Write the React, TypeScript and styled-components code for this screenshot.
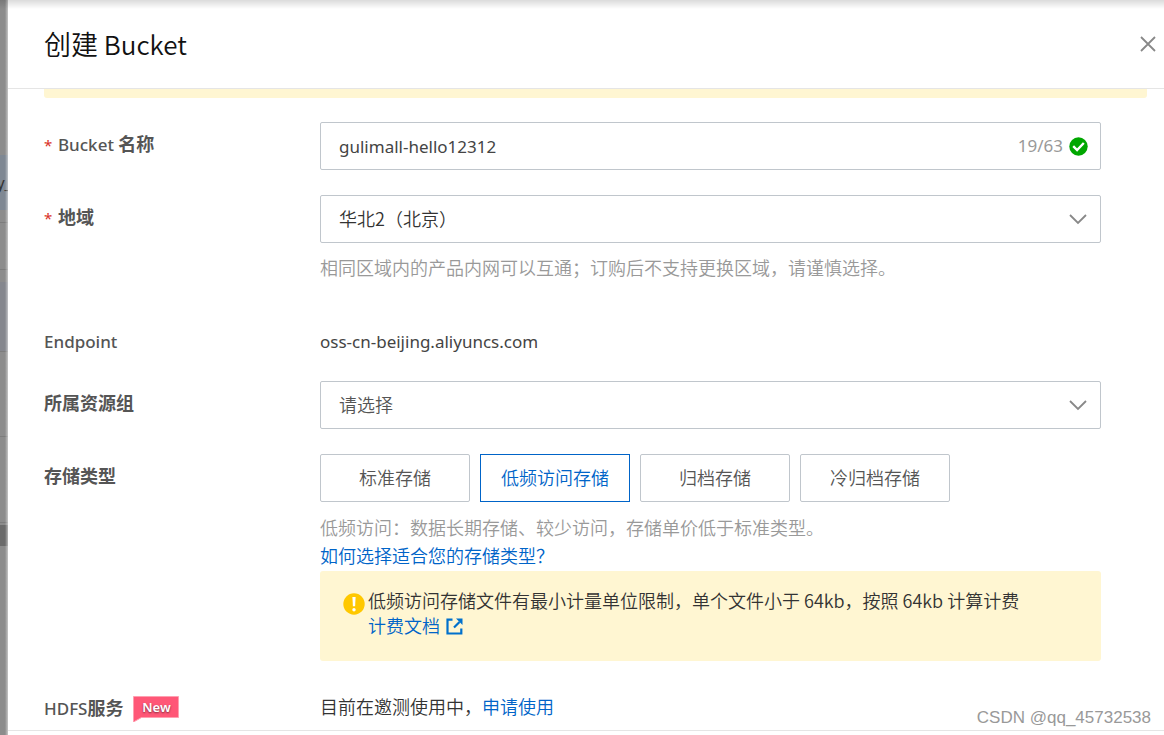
import React from "react";
import styled, { createGlobalStyle, css } from "styled-components";

const GlobalStyle = createGlobalStyle`
  *, *::before, *::after { box-sizing: border-box; }
  body {
    margin: 0;
    background: #fff;
    color: #333;
    font: 18px/24px "Noto Sans CJK SC", sans-serif;
  }
`;

const latin = css`
  font-family: "Noto Sans", "Noto Sans CJK SC", sans-serif;
`;

const Page = styled.div`
  position: relative;
  display: flex;
  height: 100vh;
  overflow: hidden;

  &::before {
    content: "";
    position: absolute;
    z-index: 1;
    inset: 0 0 auto;
    height: 9px;
    background: linear-gradient(rgba(0, 0, 0, 0.14), rgba(0, 0, 0, 0));
    pointer-events: none;
  }
`;

const Backdrop = styled.div`
  position: relative;
  flex: 0 0 8px;
  display: flex;
  flex-direction: column;
  overflow: hidden;
  background: #8c8c8c;

  &::after {
    content: "";
    position: absolute;
    inset: 0 0 0 auto;
    width: 3px;
    background: linear-gradient(to right, rgba(255, 255, 255, 0), rgba(255, 255, 255, 0.5));
  }
`;

const Strip = styled.div<{ $h: number; $bg?: string; $line?: boolean }>`
  display: flex;
  flex: 0 0 ${(p) => p.$h}px;
  align-items: center;
  justify-content: center;
  background: ${(p) => p.$bg ?? "transparent"};
  border-bottom: ${(p) => (p.$line ? "1px solid #7c7c7c" : "0")};
  color: #333;
  ${latin}
  font-size: 16px;
`;

const Drawer = styled.main`
  flex: 1;
  min-width: 0;
  display: flex;
  flex-direction: column;
  background: #fff;
`;

const Header = styled.header`
  display: flex;
  align-items: center;
  justify-content: space-between;
  flex: 0 0 89px;
  padding: 0 8px 0 36px;
  border-bottom: 1px solid #e5e5e5;
`;

const Title = styled.h1`
  margin: 0;
  font-size: 27px;
  line-height: 36px;
  font-weight: 350;
  color: #111;

  span { font-size: 26px; }
`;

const Close = styled.button`
  display: flex;
  padding: 0;
  border: 0;
  background: none;
`;

const Body = styled.div`
  flex: 1;
  min-height: 0;
  overflow: hidden;
  padding: 0 17px 0 36px;
`;

const Banner = styled.div`
  height: 9px;
  border-radius: 0 0 3px 3px;
  background: #fff6d2;
`;

const Form = styled.form`
  display: flex;
  flex-direction: column;
  gap: 25px;
  padding: 24px 46px 0 0;
`;

const Row = styled.div<{ $before?: number }>`
  display: grid;
  grid-template-columns: 276px minmax(0, 1fr);
  margin-top: ${(p) => p.$before ?? 0}px;
`;

const Name = styled.label<{ $top?: number }>`
  display: flex;
  align-items: baseline;
  align-self: start;
  padding-top: ${(p) => p.$top ?? 9}px;
  font-weight: 700;
  color: #555;
`;

const LatinPart = styled.span`
  ${latin}
  font-size: 17px;
  font-weight: 500;
`;

const Star = styled.span`
  width: 14px;
  ${latin}
  font-size: 15px;
  font-weight: 400;
  color: #d93026;
`;

const Cell = styled.div`
  min-width: 0;
`;

const Field = styled.div`
  position: relative;
  display: flex;
  align-items: center;
  height: 48px;
  border: 1px solid #c0c6cc;
  border-radius: 2px;
`;

const Input = styled.input`
  flex: 1;
  min-width: 0;
  height: 100%;
  padding: 0 18px;
  border: 0;
  outline: 0;
  background: none;
  color: #444;
  ${latin}
  font-size: 17px;
`;

const Count = styled.span`
  ${latin}
  font-size: 17px;
  color: #999;
`;

const Status = styled.svg`
  margin: 0 12px 0 6px;
`;

const Select = styled.select<{ $muted?: boolean }>`
  width: 100%;
  height: 100%;
  padding: 0 48px 2px 18px;
  border: 0;
  outline: 0;
  appearance: none;
  background: none;
  font: 350 18px/24px "Noto Sans CJK SC", sans-serif;
  color: ${(p) => (p.$muted ? "#555" : "#333")};
`;

const Chevron = styled.svg`
  position: absolute;
  right: 12px;
  top: 16px;
  pointer-events: none;
`;

const Text = styled.p<{ $muted?: boolean; $top?: number }>`
  margin: 0;
  padding-top: ${(p) => p.$top ?? 0}px;
  line-height: 28px;
  font-weight: 350;
  color: ${(p) => (p.$muted ? "#999" : "#333")};
`;

const Value = styled.span`
  ${latin}
  font-size: 17px;
  font-weight: 400;
  color: #444;
`;

const Link = styled.a`
  color: #0064c8;
  text-decoration: none;

  svg { margin-left: 6px; vertical-align: -2px; }
`;

const Options = styled.div`
  display: flex;
  gap: 10px;
  margin-bottom: 11px;
`;

const Option = styled.button<{ $on?: boolean }>`
  width: 150px;
  height: 48px;
  padding: 0 0 2px;
  border: 1px solid ${(p) => (p.$on ? "#0064c8" : "#c0c6cc")};
  border-radius: ${(p) => (p.$on ? 0 : 2)}px;
  background: #fff;
  font: 350 18px/24px "Noto Sans CJK SC", sans-serif;
  color: ${(p) => (p.$on ? "#0064c8" : "#555")};
`;

const Notice = styled.div`
  display: flex;
  min-height: 90px;
  margin-top: 2px;
  padding: 17px 23px;
  border-radius: 3px;
  background: #fff6d2;
  font-weight: 350;
  line-height: 25px;

  > svg { flex: none; margin: 5px 3px 0 0; }
`;

const Tag = styled.span`
  position: relative;
  align-self: flex-start;
  width: 46px;
  height: 26px;
  margin: 1px 0 0 10px;

  svg { position: absolute; inset: 0; }

  span {
    position: relative;
    display: block;
    text-align: center;
    ${latin}
    font-size: 13px;
    line-height: 22px;
    font-weight: 600;
    color: #fff;
    text-shadow: 0 1px 2px rgba(0, 0, 0, 0.5);
  }
`;

const Footer = styled.footer`
  flex: 0 0 5px;
  border-top: 1px solid #e5e5e5;
`;

const Watermark = styled.span`
  position: absolute;
  right: 13px;
  bottom: 5px;
  font: 17px/24px "Liberation Sans", sans-serif;
  color: #999;
`;

const Down = () => (
  <Chevron width="20" height="14" viewBox="0 0 20 14" fill="none" stroke="#888" strokeWidth="1.8">
    <path d="M2 3l8 8 8-8" />
  </Chevron>
);

export default function App() {
  return (
    <Page>
      <GlobalStyle />
      <Backdrop aria-hidden="true">
        <Strip $h={155} />
        <Strip $h={55} $bg="#7f8893">y_</Strip>
        <Strip $h={13} $line />
        <Strip $h={47} $line />
        <Strip $h={12} />
        <Strip $h={70} $bg="#85878e" $line />
        <Strip $h={85} $line />
        <Strip $h={86} $line />
        <Strip $h={2} />
        <Strip $h={21} $bg="#6b6b6b" />
      </Backdrop>
      <Drawer>
        <Header>
          <Title>创建<span> Bucket</span></Title>
          <Close type="button" aria-label="关闭">
            <svg width="16" height="16" viewBox="0 0 16 16" stroke="#888" strokeWidth="1.8">
              <path d="M1 1l14 14M15 1L1 15" />
            </svg>
          </Close>
        </Header>
        <Body>
          <Banner />
          <Form>
            <Row>
              <Name htmlFor="bucket"><Star>*</Star><LatinPart>Bucket&nbsp;</LatinPart>名称</Name>
              <Field>
                <Input id="bucket" defaultValue="gulimall-hello12312" />
                <Count>19/63</Count>
                <Status width="19" height="19" viewBox="0 0 19 19" fill="none">
                  <circle cx="9.5" cy="9.5" r="9.2" fill="#00a700" />
                  <path d="M4.2 9.2l3.9 3.8 6.7-7" stroke="#fff" strokeWidth="2.4" />
                </Status>
              </Field>
            </Row>
            <Row>
              <Name htmlFor="region"><Star>*</Star>地域</Name>
              <Cell>
                <Field>
                  <Select id="region"><option>华北2（北京）</option></Select>
                  <Down />
                </Field>
                <Text $muted $top={10}>相同区域内的产品内网可以互通；订购后不支持更换区域，请谨慎选择。</Text>
              </Cell>
            </Row>
            <Row $before={20}>
              <Name as="span" $top={4}><LatinPart>Endpoint</LatinPart></Name>
              <Text><Value>oss-cn-beijing.aliyuncs.com</Value></Text>
            </Row>
            <Row>
              <Name htmlFor="group">所属资源组</Name>
              <Field>
                <Select id="group" $muted><option>请选择</option></Select>
                <Down />
              </Field>
            </Row>
            <Row>
              <Name as="span">存储类型</Name>
              <Cell>
                <Options>
                  <Option type="button">标准存储</Option>
                  <Option type="button" $on>低频访问存储</Option>
                  <Option type="button">归档存储</Option>
                  <Option type="button">冷归档存储</Option>
                </Options>
                <Text $muted>低频访问：数据长期存储、较少访问，存储单价低于标准类型。</Text>
                <Text><Link href="#storage">如何选择适合您的存储类型？</Link></Text>
                <Notice>
                  <svg width="22" height="22" viewBox="0 0 22 22">
                    <circle cx="11" cy="11" r="10.7" fill="#ffc800" />
                    <path d="M9.400 4h3.200l-.5 9.200h-2.200z" fill="#fff" />
                    <circle cx="11" cy="16.700" r="1.700" fill="#fff" />
                  </svg>
                  <div>
                    低频访问存储文件有最小计量单位限制，单个文件小于 64kb，按照 64kb 计算计费<br />
                    <Link href="#billing">
                      计费文档
                      <svg width="17" height="17" viewBox="0 0 17 17" fill="none" stroke="#0070cc" strokeWidth="2.2">
                        <path d="M6.500 1.700H1.500V15.500H15.300V10.500M8 9.500l5.500-5.500" />
                        <path d="M10 .500h6.500V7z" fill="#0070cc" stroke="none" />
                      </svg>
                    </Link>
                  </div>
                </Notice>
              </Cell>
            </Row>
            <Row>
              <Name as="span">
                <LatinPart>HDFS</LatinPart>服务
                <Tag>
                  <svg width="46" height="26" viewBox="0 0 46 26">
                    <path d="M.5.5h45v21h-37l-8 4.500z" fill="#ff5777" stroke="#ff9fb0" />
                  </svg>
                  <span>New</span>
                </Tag>
              </Name>
              <Text $top={6}>目前在邀测使用中，<Link href="#apply">申请使用</Link></Text>
            </Row>
          </Form>
        </Body>
        <Footer />
      </Drawer>
      <Watermark>CSDN @qq_45732538</Watermark>
    </Page>
  );
}
